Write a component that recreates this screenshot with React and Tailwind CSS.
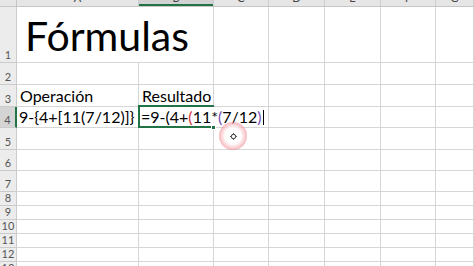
const COLS = [
  { key: "A", w: "w-[122px]" },
  { key: "B", w: "w-[75px]" },
  { key: "C", w: "w-[55px]" },
  { key: "D", w: "w-[56px]" },
  { key: "E", w: "w-[56px]" },
  { key: "F", w: "w-[55px]" },
  { key: "G", w: "flex-1" },
];

const ROWS = [
  { n: 1, h: "h-[56px]" },
  { n: 2, h: "h-[22px]" },
  { n: 3, h: "h-[22px]" },
  { n: 4, h: "h-[21px]" },
  { n: 5, h: "h-[22px]" },
  { n: 6, h: "h-[21px]" },
  { n: 7, h: "h-[21px]" },
  { n: 8, h: "h-[14px]" },
  { n: 9, h: "h-[14px]" },
  { n: 10, h: "h-[14px]" },
  { n: 11, h: "h-[14px]" },
  { n: 12, h: "h-[14px]" },
  { n: 13, h: "h-[14px]" },
];

const font = "font-['Lato','Liberation_Sans',sans-serif]";

function Formula() {
  return (
    <span className="relative whitespace-nowrap">
      =9-(4+<span className="text-[#d9363e]">(</span>11*
      <span className="text-[#7a4fb0]">(</span>7/12
      <span className="text-[#7a4fb0]">)</span>
      <span className="ml-[1px] inline-block h-[15px] w-px bg-black align-[-2px]" />
    </span>
  );
}

function cellContent(row, col) {
  if (row === 1 && col === "A")
    return (
      <span className="mb-[5px] ml-[8px] whitespace-nowrap text-[41px] leading-none text-black">
        Fórmulas
      </span>
    );
  if (row === 3 && col === "A") return <span className="ml-[3px]">Operación</span>;
  if (row === 3 && col === "B") return <span className="ml-[3px]">Resultado</span>;
  if (row === 4 && col === "A")
    return <span className="ml-[2px] whitespace-nowrap">9-{"{"}4+[11(7/12)]{"}"}</span>;
  if (row === 4 && col === "B")
    return (
      <span className="ml-[2px]">
        <Formula />
      </span>
    );
  return null;
}

function Cell({ row, col }) {
  const overflow = (row === 1 && col.key === "A") || (row === 4 && col.key === "B");
  const active = row === 4 && col.key === "B";
  return (
    <div
      className={`relative flex shrink-0 items-end border-b border-[#d6d6d6] pb-[1px] text-[16px] leading-[18px] text-black ${col.w} ${
        overflow ? "z-10 overflow-visible" : "border-r"
      }`}
    >
      {cellContent(row, col.key)}
      {active && (
        <>
          <div className="pointer-events-none absolute -left-[1px] -top-[2px] h-[23px] w-[76px] border-2 border-r-0 border-[#217346]" />
          <div className="absolute -bottom-[3px] -right-[2px] h-[5px] w-[5px] border border-white bg-[#217346]" />
        </>
      )}
    </div>
  );
}

export default function App() {
  return (
    <div className={`relative h-[266px] w-[474px] overflow-hidden bg-white ${font}`}>
      <div className="flex h-[7px] border-b border-[#c6c6c6] bg-[#e6e6e6]">
        <div className="w-[17px] shrink-0 border-r border-[#c6c6c6]" />
        {COLS.map((c) => (
          <div
            key={c.key}
            className={`relative flex shrink-0 justify-center overflow-hidden border-r border-[#cfcfcf] text-[11px] leading-[11px] text-[#444] ${c.w} ${
              c.key === "B" ? "bg-[#d2d2d2]" : ""
            }`}
          >
            <span className="-mt-[8px]">{c.key}</span>
            {c.key === "B" && <div className="absolute bottom-0 left-0 h-[2px] w-full bg-[#217346]" />}
          </div>
        ))}
      </div>
      {ROWS.map((r) => (
        <div key={r.n} className={`flex ${r.h}`}>
          <div
            className={`flex w-[17px] shrink-0 items-end justify-center border-b border-r border-[#cbcbcb] pb-[1px] text-[11px] leading-[12px] text-[#555] ${
              r.n === 4 ? "border-r-2 border-r-[#217346] bg-[#d4d4d4]" : "bg-[#ececec]"
            }`}
          >
            {r.n}
          </div>
          {COLS.map((c) => (
            <Cell key={c.key} row={r.n} col={c} />
          ))}
        </div>
      ))}
      <div className="absolute left-[219px] top-[122px] z-20 flex h-[28px] w-[28px] items-center justify-center rounded-full bg-[radial-gradient(circle,_#ffffff_40%,_rgba(236,92,104,0.5)_75%,_rgba(236,92,104,0)_100%)]">
        <svg width="7" height="7" viewBox="0 0 7 7">
          <circle cx="3.5" cy="3.5" r="2.2" fill="#fff" stroke="#333" strokeWidth="1" />
          <path d="M3.5 0v1.3M3.5 5.7V7M0 3.5h1.3M5.7 3.5H7" stroke="#333" strokeWidth="0.8" />
        </svg>
      </div>
    </div>
  );
}
